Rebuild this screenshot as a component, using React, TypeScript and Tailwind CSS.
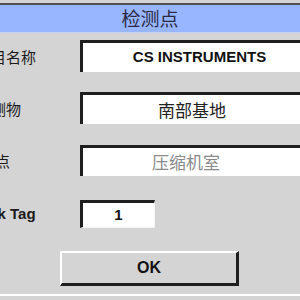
const cjk = "font-['Noto_Sans_CJK_SC','Noto_Sans',sans-serif]";
const arial = "font-['Liberation_Sans','Noto_Sans_CJK_SC',sans-serif]";
const field =
  "flex h-full items-center border-t-[3px] border-l-[3px] border-t-[#1e1e1e] border-l-[#1e1e1e] bg-white";

function Label({ text, offset, bold }: { text: string; offset: string; bold?: boolean }) {
  return (
    <div className="w-[80px] shrink-0 overflow-hidden">
      <div className={`${offset} whitespace-nowrap text-[15px] text-[#1a1a1a] ${bold ? `${arial} font-bold` : cjk}`}>
        {text}
      </div>
    </div>
  );
}

export default function App() {
  return (
    <div className="h-[300px] w-[300px] overflow-hidden bg-[#d4d4d4] pt-[3px]">
      {/* title bar */}
      <div
        className={`flex h-[30px] items-center justify-center border-t-2 border-b border-t-[#505050] border-b-[#c6d2ee] bg-[#98b6ff] text-[19px] text-[#2a2a44] ${cjk}`}
      >
        检测点
      </div>

      <div className="mt-[7px] flex h-[32px] items-center">
        <Label text="项目名称" offset="ml-[-24px] mt-[3px]" />
        <div className={`${field} flex-1 justify-center pl-[16px] text-[15px] font-bold text-[#111] ${arial}`}>
          CS INSTRUMENTS
        </div>
      </div>

      <div className="mt-[20px] flex h-[32px] items-center">
        <Label text="被测物" offset="ml-[-24px] mt-[2px]" />
        <div className={`${field} flex-1 pl-[75px] text-[17px] text-[#222] ${cjk}`}>南部基地</div>
      </div>

      <div className="mt-[21px] flex h-[31px] items-center">
        <Label text="测量点" offset="ml-[-35px] mt-[2px]" />
        <div className={`${field} flex-1 pl-[69px] text-[17px] text-[#8a8a8a] ${cjk}`}>压缩机室</div>
      </div>

      <div className="mt-[24px] flex h-[28px] items-center">
        <Label text="Link Tag" offset="ml-[-25px]" bold />
        <div
          className={`${field} w-[75px] justify-center border-r border-b border-r-[#f4f4f4] border-b-[#f4f4f4] text-[15px] font-bold text-[#111] ${arial}`}
        >
          1
        </div>
      </div>

      <div
        className={`mt-[23px] ml-[60px] flex h-[35px] w-[179px] items-center justify-center border-t-2 border-l-2 border-r-[3px] border-b-[3px] border-t-white border-l-white border-r-[#1e1e1e] border-b-[#1e1e1e] text-[16px] font-bold text-[#111] ${arial}`}
      >
        OK
      </div>

      <div className="mt-[8px] border-t-2 border-white" />
    </div>
  );
}
